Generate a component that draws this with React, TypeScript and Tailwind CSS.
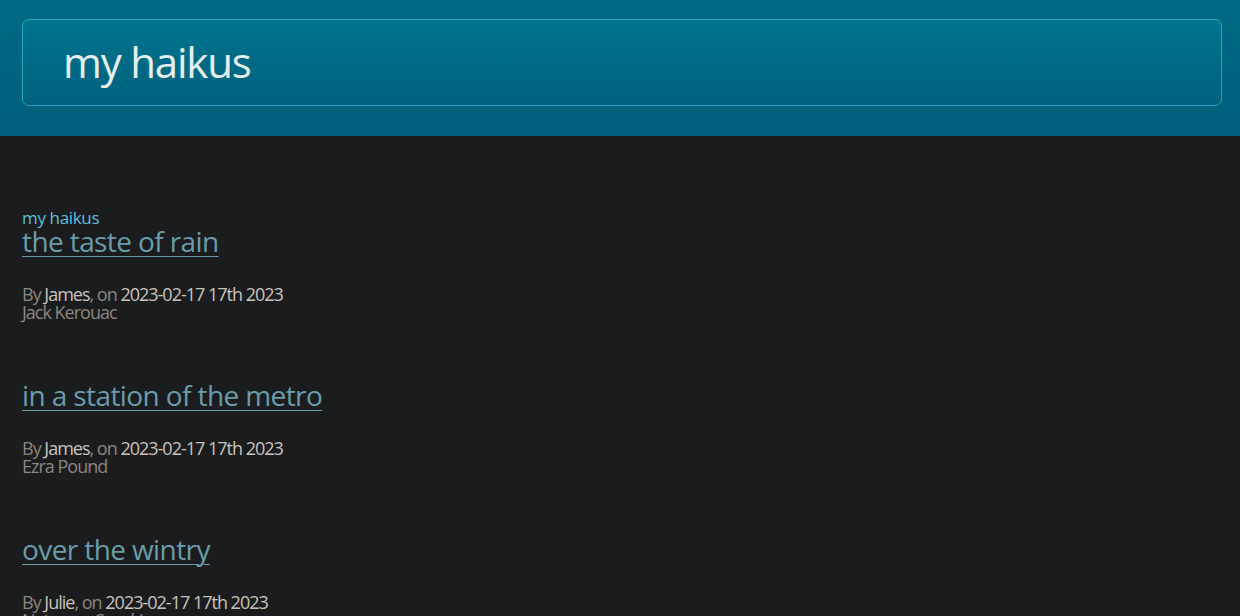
import React from "react";

const haikus = [
  { title: "the taste of rain", by: "James", author: "Jack Kerouac" },
  { title: "in a station of the metro", by: "James", author: "Ezra Pound" },
  { title: "over the wintry", by: "Julie", author: "Natsume Soseki" },
];

export default function App() {
  return (
    <div className="min-h-[616px] bg-[#1b1c1e] font-['Open_Sans',sans-serif]">
      <header className="bg-gradient-to-b from-[#006a82] to-[#005f7b] pt-[19px] pb-[30px] pl-[22px] pr-[18px]">
        <div className="h-[87px] rounded-[7px] border border-[#22a6c8] bg-gradient-to-b from-[#00748f] to-[#00617d] pl-[40px] flex items-center">
          <h1 className="text-[42px] tracking-[-1.2px] text-[#e6eeee] leading-none pb-[2px]">my haikus</h1>
        </div>
      </header>
      <main className="px-[22px] pt-[72px]">
        <div className="text-[17px] leading-[20px] tracking-[-0.35px] text-[#5bc0de]">my haikus</div>
        {haikus.map((h, i) => (
          <div key={i} className={i === 0 ? "-mt-[4px]" : "mt-[57px]"}>
            <a href="#" className="text-[28px] leading-[34px] tracking-[-0.6px] text-[#6a9cac] underline decoration-1 underline-offset-[4px]">
              {h.title}
            </a>
            <div className="mt-[27px] text-[18px] leading-[18px] tracking-[-1px] text-[#8b8680]">
              By <span className="text-[#c9c3bc]">{h.by}</span>, on <span className="text-[#c9c3bc]">2023-02-17 17th 2023</span>
            </div>
            <div className="text-[18px] leading-[18px] tracking-[-1px] text-[#8b8680]">{h.author}</div>
          </div>
        ))}
      </main>
    </div>
  );
}
